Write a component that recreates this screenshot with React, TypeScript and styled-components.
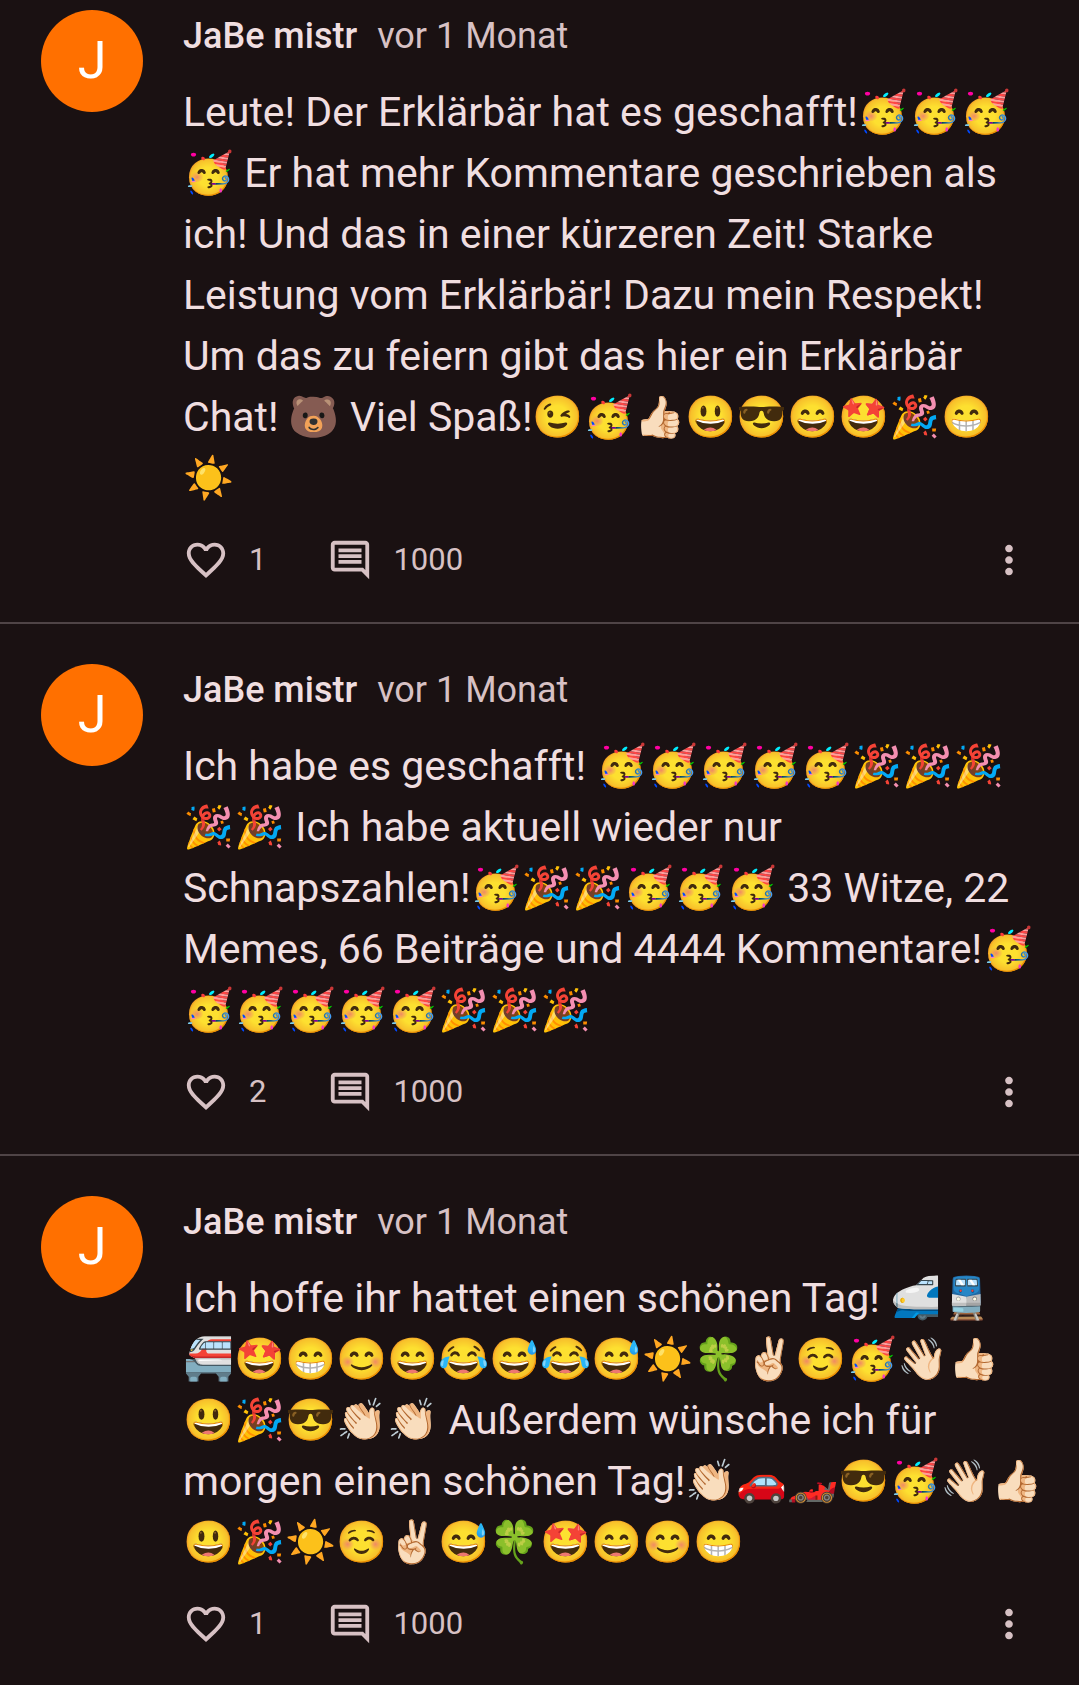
import React from "react";
import styled, { createGlobalStyle } from "styled-components";

const Global = createGlobalStyle`
  body {
    margin: 0;
    background: #1a1112;
    color: #f0dee0;
    font-family: Roboto, "Noto Color Emoji", sans-serif;
  }
`;

const Feed = styled.main`
  display: flex;
  flex-direction: column;
`;

const Card = styled.article<{ $first?: boolean }>`
  display: flex;
  align-items: flex-start;
  gap: 40px;
  padding: ${(p) => (p.$first ? "10px" : "40px")} 32px 32px 41px;
  border-bottom: 2px solid #4f4446;

  &:last-child {
    border-bottom: none;
  }
`;

const Avatar = styled.div`
  flex: none;
  display: grid;
  place-items: center;
  width: 102px;
  height: 102px;
  border-radius: 50%;
  background: #ff7000;
  color: #fff;
  font-size: 52px;
  line-height: 60px;
`;

const Body = styled.div`
  flex: 1;
  min-width: 0;
`;

const Head = styled.header`
  display: flex;
  align-items: baseline;
  gap: 20px;
  line-height: 52px;
  font-size: 36px;
`;

const Author = styled.span`
  font-weight: 500;
`;

const Time = styled.time`
  color: #d7c1c4;
`;

const Text = styled.p`
  margin: 20px 0 0;
  font-size: 41px;
  line-height: 61px;
  white-space: pre-line;
`;

const Actions = styled.footer`
  display: flex;
  align-items: center;
  gap: 61px;
  margin-top: 20px;
  padding-right: 15px;
`;

const Action = styled.button`
  display: flex;
  align-items: center;
  gap: 20px;
  height: 61px;
  padding: 0;
  border: none;
  background: none;
  color: #d7c1c4;
  font: inherit;
  font-size: 31px;
  cursor: pointer;

  &:last-child {
    margin-left: auto;
  }
`;

const Icon = styled.svg`
  flex: none;
  width: 46px;
  height: 46px;
  fill: currentColor;
`;

const HEART =
  "M16.5 3c-1.74 0-3.41.81-4.5 2.09C10.91 3.81 9.24 3 7.5 3 4.42 3 2 5.42 2 8.5c0 3.78 3.4 6.86 8.55 11.54L12 21.35l1.45-1.32C18.6 15.36 22 12.28 22 8.5 22 5.42 19.58 3 16.5 3zm-4.4 15.55l-.1.1-.1-.1C7.14 14.24 4 11.39 4 8.5 4 6.5 5.5 5 7.5 5c1.54 0 3.04.99 3.57 2.36h1.87C13.46 5.99 14.96 5 16.5 5c2 0 3.5 1.5 3.5 3.5 0 2.89-3.14 5.74-7.9 10.05z";
const COMMENT =
  "M21.99 4c0-1.1-.89-2-1.99-2H4c-1.1 0-2 .9-2 2v12c0 1.1.9 2 2 2h14l4 4-.01-18zM20 4v13.17L18.83 16H4V4h16zM6 12h12v2H6zm0-3h12v2H6zm0-3h12v2H6z";
const MORE =
  "M12 8c1.1 0 2-.9 2-2s-.9-2-2-2-2 .9-2 2 .9 2 2 2zm0 2c-1.1 0-2 .9-2 2s.9 2 2 2 2-.9 2-2-.9-2-2-2zm0 6c-1.1 0-2 .9-2 2s.9 2 2 2 2-.9 2-2-.9-2-2-2z";

const Glyph = ({ d }: { d: string }) => (
  <Icon viewBox="0 0 24 24" aria-hidden="true">
    <path d={d} />
  </Icon>
);

const comments = [
  {
    likes: 1,
    replies: 1000,
    text: "Leute! Der Erklärbär hat es geschafft!🥳🥳🥳🥳 Er hat mehr Kommentare geschrieben als ich! Und das in einer kürzeren Zeit! Starke Leistung vom Erklärbär! Dazu mein Respekt! Um das zu feiern gibt das hier ein Erklärbär Chat! 🐻 Viel Spaß!😉🥳👍🏻😃😎😄🤩🎉😁\n☀️",
  },
  {
    likes: 2,
    replies: 1000,
    text: "Ich habe es geschafft! 🥳🥳🥳🥳🥳🎉🎉🎉🎉🎉 Ich habe aktuell wieder nur Schnapszahlen!🥳🎉🎉🥳🥳🥳 33 Witze, 22 Memes, 66 Beiträge und 4444 Kommentare!🥳🥳🥳🥳🥳🥳🎉🎉🎉",
  },
  {
    likes: 1,
    replies: 1000,
    text: "Ich hoffe ihr hattet einen schönen Tag! 🚅🚆\n🚝🤩😁😊😄😂😅😂😅☀️🍀✌🏻☺️🥳👋🏻👍🏻😃🎉😎👏🏻👏🏻 Außerdem wünsche ich für morgen einen schönen Tag!👏🏻🚗🏎️😎🥳👋🏻👍🏻😃🎉☀️☺️✌🏻😅🍀🤩😄😊😁",
  },
];

export default function App() {
  return (
    <>
      <Global />
      <Feed>
        {comments.map((c, i) => (
          <Card key={i} $first={i === 0}>
            <Avatar aria-hidden="true">J</Avatar>
            <Body>
              <Head>
                <Author>JaBe mistr</Author>
                <Time>vor 1 Monat</Time>
              </Head>
              <Text>{c.text}</Text>
              <Actions>
                <Action type="button" aria-label={`Gefällt mir: ${c.likes}`}>
                  <Glyph d={HEART} />
                  {c.likes}
                </Action>
                <Action type="button" aria-label={`Antworten: ${c.replies}`}>
                  <Glyph d={COMMENT} />
                  {c.replies}
                </Action>
                <Action type="button" aria-label="Mehr">
                  <Glyph d={MORE} />
                </Action>
              </Actions>
            </Body>
          </Card>
        ))}
      </Feed>
    </>
  );
}
